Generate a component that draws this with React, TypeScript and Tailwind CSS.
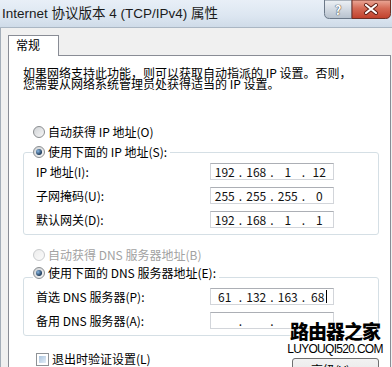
import { Fragment } from 'react'

const cjk = { fontFamily: '"Noto Sans CJK SC", "Noto Sans", sans-serif' }

function Radio({ checked, disabled }: { checked?: boolean; disabled?: boolean }) {
  return (
    <span
      className={`flex items-center justify-center w-[12px] h-[12px] rounded-full border shrink-0 ${
        disabled
          ? 'border-[#c9cbcd] bg-[linear-gradient(135deg,#ececec,#fbfbfb)]'
          : 'border-[#8a8d90] bg-[linear-gradient(135deg,#cfd2d5,#f7f7f7)]'
      }`}
    >
      {checked && (
        <span className="w-[6px] h-[6px] rounded-full bg-[radial-gradient(circle_at_35%_35%,#8ab8e4,#1d3957_70%)]" />
      )}
    </span>
  )
}

function IpBox({ parts, cursor }: { parts: string[]; cursor?: boolean }) {
  return (
    <div className="flex items-center w-[124px] h-[17px] border border-[#d2d5da] border-t-[#acafb5] bg-white leading-none text-[#111]">
      {parts.map((p, i) => (
        <Fragment key={i}>
          {i > 0 && <span className="w-[4px] text-center">.</span>}
          <span className="flex-1 flex items-center justify-center">
            {p}
            {cursor && i === parts.length - 1 && <span className="ml-[2px] w-px h-[13px] bg-black" />}
          </span>
        </Fragment>
      ))}
    </div>
  )
}

function Row({ label, parts, cursor }: { label: string; parts: string[]; cursor?: boolean }) {
  return (
    <div className="flex items-center pl-[12px]">
      <span className="w-[174px]">{label}</span>
      <IpBox parts={parts} cursor={cursor} />
    </div>
  )
}

function CaptionButtons() {
  return (
    <svg width="67" height="19" viewBox="0 0 67 19" className="block">
      <defs>
        <linearGradient id="helpBg" x1="0" y1="0" x2="0" y2="1">
          <stop offset="0" stopColor="#eef2f6" />
          <stop offset="0.45" stopColor="#d5dce4" />
          <stop offset="1" stopColor="#b6c1cd" />
        </linearGradient>
        <linearGradient id="closeBg" x1="0" y1="0" x2="0" y2="1">
          <stop offset="0" stopColor="#eba999" />
          <stop offset="0.45" stopColor="#d56b56" />
          <stop offset="1" stopColor="#c0402b" />
        </linearGradient>
      </defs>
      <path d="M0.5 0 V13.5 Q0.5 18.5 5.5 18.5 H28 V0 Z" fill="url(#helpBg)" stroke="#6b7888" />
      <path d="M28 0 V18.5 H61.5 Q66.5 18.5 66.5 13.5 V0 Z" fill="url(#closeBg)" stroke="#6e2f24" />
      <path d="M42 5 L52 13 M52 5 L42 13" stroke="#5a1a10" strokeWidth="4" strokeLinecap="round" />
      <path d="M42 5 L52 13 M52 5 L42 13" stroke="#ffffff" strokeWidth="2.2" strokeLinecap="round" />
    </svg>
  )
}

export default function App() {
  return (
    <div
      className="relative w-[392px] h-[367px] overflow-hidden bg-[#f0f0f0] flex flex-col text-[12px] leading-[14px] text-black"
      style={cjk}
    >
      {/* title bar */}
      <div className="h-[28px] shrink-0 flex items-start justify-between border-b border-[#aab6c3] bg-[#dde7f2] bg-[linear-gradient(#e8eff7,#dce6f1_60%,#cfdbe8)]">
        <span
          className="pl-[2px] pt-[5px] text-[13.5px] leading-[18px] text-[#1b1b1b] whitespace-nowrap"
          style={{ fontFamily: '"Liberation Sans", "Noto Sans CJK SC", sans-serif' }}
        >
          Internet 协议版本 4 (TCP/IPv4) 属性
        </span>
        <div className="relative shrink-0 mr-[1px]">
          <CaptionButtons />
          <span className="absolute left-0 top-0 w-[28px] h-[18px] flex items-center justify-center text-[13px] leading-none font-bold text-white [text-shadow:0_0_1px_#333,0_0_1px_#333]">
            ?
          </span>
        </div>
      </div>

      {/* client area */}
      <div className="flex-1 flex flex-col pl-[7px] pr-[1px] border-l border-[#a3adb8]">
        <div className="h-[27px] shrink-0 flex items-end">
          <div className="relative z-10 h-[21px] -mb-px w-[51px] border border-b-0 border-[#898c95] bg-white pl-[7px] pt-[2px]">
            常规
          </div>
        </div>

        <div className="flex-1 flex flex-col border border-[#898c95] bg-white pl-[14px] pr-[11px]">
          <p className="mt-[11px] leading-[11px]">
            如果网络支持此功能，则可以获取自动指派的 IP 设置。否则，
            <br />
            您需要从网络系统管理员处获得适当的 IP 设置。
          </p>

          <div className="mt-[36px] ml-[10px] h-[14px] flex items-center gap-[3px]">
            <Radio />
            <span>自动获得 IP 地址(O)</span>
          </div>

          <div className="mt-[13px] border border-[#d5dfe5] rounded-[3px] pb-[6px] flex flex-col">
            <div className="-mt-[8px] ml-[9px] h-[14px] w-fit pr-[3px] bg-white flex items-center gap-[3px]">
              <Radio checked />
              <span>使用下面的 IP 地址(S):</span>
            </div>
            <div className="mt-[4px] flex flex-col gap-[7px]">
              <Row label="IP 地址(I):" parts={['192', '168', '1', '12']} />
              <Row label="子网掩码(U):" parts={['255', '255', '255', '0']} />
              <Row label="默认网关(D):" parts={['192', '168', '1', '1']} />
            </div>
          </div>

          <div className="mt-[13px] ml-[10px] h-[14px] flex items-center gap-[3px] text-[#a2a2a2]">
            <Radio disabled />
            <span>自动获得 DNS 服务器地址(B)</span>
          </div>

          <div className="mt-[15px] border border-[#d5dfe5] rounded-[3px] pb-[6px] flex flex-col">
            <div className="-mt-[12px] ml-[9px] h-[14px] w-fit pr-[3px] bg-white flex items-center gap-[3px]">
              <Radio checked />
              <span>使用下面的 DNS 服务器地址(E):</span>
            </div>
            <div className="mt-[8px] flex flex-col gap-[7px]">
              <Row label="首选 DNS 服务器(P):" parts={['61', '132', '163', '68']} cursor />
              <Row label="备用 DNS 服务器(A):" parts={['', '', '', '']} />
            </div>
          </div>

          <div className="mt-[16px] flex justify-between items-start">
            <div className="ml-[13px] h-[14px] flex items-center gap-[3px]">
              <span className="w-[13px] h-[13px] border border-[#8e9296] bg-white p-[2px]">
                <span className="block w-full h-full bg-[#c7d8ea] bg-[linear-gradient(135deg,#aac4de,#e4eef8)]" />
              </span>
              <span>退出时验证设置(L)</span>
            </div>
            <div className="mt-[6px] w-[87px] h-[23px] border border-[#707070] rounded-[3px] bg-[#e9e9e9] bg-[linear-gradient(#f2f2f2,#ebebeb_50%,#dddddd)] flex items-center justify-center">
              高级(V)...
            </div>
          </div>
        </div>
      </div>

      {/* watermark */}
      <div className="absolute left-[290px] top-[321px] w-[90px] flex flex-col items-center leading-none">
        <span className="text-[19px] font-black tracking-[-1px] text-black [text-shadow:0_0_2px_#fff,0_0_2px_#fff]">
          路由器之家
        </span>
        <span
          className="mt-[3px] text-[12px] tracking-[-0.7px] text-black [text-shadow:0_0_2px_#fff,0_0_2px_#fff]"
          style={{ fontFamily: '"Liberation Sans", sans-serif' }}
        >
          LUYOUQI520.COM
        </span>
      </div>
    </div>
  )
}
